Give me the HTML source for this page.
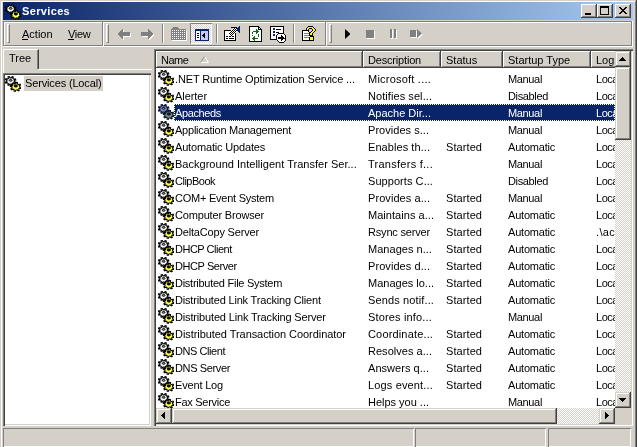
<!DOCTYPE html>
<html><head><meta charset="utf-8">
<style>
*{margin:0;padding:0;box-sizing:border-box}
html,body{width:637px;height:447px;overflow:hidden;background:#d4d0c8;font-family:"Liberation Sans",sans-serif;font-size:11px;color:#000}
.a{position:absolute}
.t{position:absolute;white-space:nowrap;line-height:13px}
.btn{position:absolute;background:#d4d0c8;box-shadow:inset -1px -1px #404040,inset 1px 1px #fff,inset -2px -2px #808080}
.hdr{position:absolute;top:51px;height:17px;background:#d4d0c8;box-shadow:inset -1px -1px #404040,inset 1px 1px #fff,inset -2px -2px #808080}
.hdr span{position:absolute;left:5px;top:3px;line-height:13px;white-space:nowrap}
.grip{position:absolute;top:24px;width:3px;height:19px;border-left:1px solid #fff;border-top:1px solid #fff;border-right:1px solid #808080;border-bottom:1px solid #808080}
.sep{position:absolute;top:24px;width:2px;height:19px;border-left:1px solid #808080;border-right:1px solid #fff}
.row{position:absolute;left:156px;width:459px;height:17px}
.row .t{top:3px}
.dith{background-color:#fff;background-image:linear-gradient(45deg,#d4d0c8 25%,transparent 25%,transparent 75%,#d4d0c8 75%),linear-gradient(45deg,#d4d0c8 25%,transparent 25%,transparent 75%,#d4d0c8 75%);background-size:2px 2px;background-position:0 0,1px 1px}
</style></head>
<body>
<div style="position:absolute;left:0;top:0;width:637px;height:447px;will-change:transform">
<svg width="0" height="0" style="position:absolute">
<defs>
<g id="gear"><path d="M9.32 5.64 L10.77 6.33 L10.26 7.32 L8.68 6.89 L7.70 7.69 L8.15 9.05 L6.96 9.44 L6.21 8.19 L4.85 8.17 L4.03 9.39 L2.87 8.96 L3.38 7.62 L2.43 6.78 L0.84 7.16 L0.38 6.16 L1.85 5.52 L1.88 4.36 L0.43 3.67 L0.94 2.68 L2.52 3.11 L3.50 2.31 L3.05 0.95 L4.24 0.56 L4.99 1.81 L6.35 1.83 L7.17 0.61 L8.33 1.04 L7.82 2.38 L8.77 3.22 L10.36 2.84 L10.82 3.84 L9.35 4.48Z" fill="#fff" stroke="#000" stroke-width="1.15"/><ellipse cx="5.6" cy="4.4" rx="1.4" ry="0.9" fill="#a0a0a0" stroke="#000" stroke-width="1"/><path d="M14.70 10.90 L16.28 11.32 L16.00 12.36 L14.35 12.22 L13.56 13.16 L14.31 14.38 L13.22 14.95 L12.18 13.89 L10.80 14.10 L10.28 15.39 L9.02 15.17 L9.20 13.81 L8.04 13.16 L6.56 13.77 L5.86 12.88 L7.15 12.03 L6.90 10.90 L5.32 10.48 L5.60 9.44 L7.25 9.58 L8.04 8.64 L7.29 7.42 L8.38 6.85 L9.42 7.91 L10.80 7.70 L11.32 6.41 L12.58 6.63 L12.40 7.99 L13.56 8.64 L15.04 8.03 L15.74 8.92 L14.45 9.77Z" fill="#ffff50" stroke="#000" stroke-width="1.05"/><ellipse cx="10.8" cy="10.0" rx="1.7" ry="1.0" fill="#000" stroke="#000" stroke-width="1"/></g>
<g id="gearsel"><path d="M9.32 5.64 L10.77 6.33 L10.26 7.32 L8.68 6.89 L7.70 7.69 L8.15 9.05 L6.96 9.44 L6.21 8.19 L4.85 8.17 L4.03 9.39 L2.87 8.96 L3.38 7.62 L2.43 6.78 L0.84 7.16 L0.38 6.16 L1.85 5.52 L1.88 4.36 L0.43 3.67 L0.94 2.68 L2.52 3.11 L3.50 2.31 L3.05 0.95 L4.24 0.56 L4.99 1.81 L6.35 1.83 L7.17 0.61 L8.33 1.04 L7.82 2.38 L8.77 3.22 L10.36 2.84 L10.82 3.84 L9.35 4.48Z" fill="#8591b4" stroke="#05123a" stroke-width="1.15"/><ellipse cx="5.6" cy="4.4" rx="1.4" ry="0.9" fill="#65739a" stroke="#05123a" stroke-width="1"/><path d="M14.70 10.90 L16.28 11.32 L16.00 12.36 L14.35 12.22 L13.56 13.16 L14.31 14.38 L13.22 14.95 L12.18 13.89 L10.80 14.10 L10.28 15.39 L9.02 15.17 L9.20 13.81 L8.04 13.16 L6.56 13.77 L5.86 12.88 L7.15 12.03 L6.90 10.90 L5.32 10.48 L5.60 9.44 L7.25 9.58 L8.04 8.64 L7.29 7.42 L8.38 6.85 L9.42 7.91 L10.80 7.70 L11.32 6.41 L12.58 6.63 L12.40 7.99 L13.56 8.64 L15.04 8.03 L15.74 8.92 L14.45 9.77Z" fill="#7d8d65" stroke="#05123a" stroke-width="1.05"/><ellipse cx="10.8" cy="10.0" rx="1.7" ry="1.0" fill="#05123a" stroke="#05123a" stroke-width="1"/></g>
</defs>
</svg>

<!-- window frame -->
<div class="a" style="left:0;top:0;width:637px;height:1px;background:#d4d0c8"></div>
<div class="a" style="left:1px;top:1px;width:634px;height:1px;background:#fff"></div>
<div class="a" style="left:1px;top:1px;width:1px;height:446px;background:#fff"></div>
<div class="a" style="left:635px;top:1px;width:1px;height:446px;background:#808080"></div>
<div class="a" style="left:636px;top:0;width:1px;height:447px;background:#404040"></div>

<!-- title bar -->
<div class="a" style="left:3px;top:2px;width:630px;height:18px;background:linear-gradient(to right,#0a246a,#a6caf0)"></div>
<svg class="a" style="left:5px;top:4px" width="16" height="16"><use href="#gear"/></svg>
<div class="t" style="left:22px;top:5px;color:#fff;font-weight:bold;font-size:11px;letter-spacing:0.35px">Services</div>
<div class="btn" style="left:581px;top:4px;width:16px;height:14px"><div class="a" style="left:4px;top:9px;width:6px;height:2px;background:#000"></div></div>
<div class="btn" style="left:597px;top:4px;width:16px;height:14px"><div class="a" style="left:3px;top:2px;width:9px;height:9px;border:1px solid #000;border-top-width:2px"></div></div>
<div class="btn" style="left:615px;top:4px;width:16px;height:14px">
<svg class="a" style="left:4px;top:3px" width="8" height="7"><path d="M0 0h2v1h1v1h2v-1h1v-1h2v1h-1v1h-1v1h-1v1h1v1h1v1h1v1h-2v-1h-1v-1h-2v1h-1v1h-2v-1h1v-1h1v-1h1v-1h-1v-1h-1v-1h-1z" fill="#000"/></svg>
</div>

<!-- toolbar etched box -->
<div class="a" style="left:3px;top:21px;width:629px;height:1px;background:#808080"></div>
<div class="a" style="left:3px;top:21px;width:1px;height:25px;background:#808080"></div>
<div class="a" style="left:4px;top:22px;width:627px;height:1px;background:#fff"></div>
<div class="a" style="left:4px;top:22px;width:1px;height:23px;background:#fff"></div>
<div class="a" style="left:3px;top:45px;width:629px;height:1px;background:#808080"></div>
<div class="a" style="left:631px;top:21px;width:1px;height:25px;background:#808080"></div>
<div class="a" style="left:3px;top:46px;width:630px;height:1px;background:#fff"></div>
<div class="a" style="left:632px;top:21px;width:1px;height:26px;background:#fff"></div>

<!-- band 1 menu -->
<div class="grip" style="left:7px"></div>
<div class="t" style="left:22px;top:28px">Action</div>
<div class="a" style="left:22px;top:39px;width:6px;height:1px;background:#000"></div>
<div class="t" style="left:68px;top:28px;letter-spacing:-0.3px">View</div>
<div class="a" style="left:68px;top:39px;width:6px;height:1px;background:#000"></div>
<div class="a" style="left:102px;top:22px;width:1px;height:24px;background:#808080"></div>
<div class="a" style="left:103px;top:22px;width:1px;height:24px;background:#fff"></div>

<!-- band 2 -->
<div class="grip" style="left:106px"></div>
<!-- back arrow disabled -->
<svg class="a" style="left:116px;top:28px" width="16" height="13">
<path d="M6 1h1v3h7v4h-7v3h-1v-1h-1v-1h-1v-1h-1v-1h-1v-2h1v-1h1v-1h1v-1h1z" fill="#fff" transform="translate(1,1)"/>
<path d="M6 1h1v3h7v4h-7v3h-1v-1h-1v-1h-1v-1h-1v-1h-1v-2h1v-1h1v-1h1v-1h1z" fill="#808080"/>
</svg>
<svg class="a" style="left:140px;top:28px" width="15" height="13">
<path d="M1 4h7v-3h1v1h1v1h1v1h1v1h1v2h-1v1h-1v1h-1v1h-1v1h-1v-3h-7z" fill="#fff" transform="translate(1,1)"/>
<path d="M1 4h7v-3h1v1h1v1h1v1h1v1h1v2h-1v1h-1v1h-1v1h-1v1h-1v-3h-7z" fill="#808080"/>
</svg>
<div class="sep" style="left:162px"></div>
<!-- folder disabled -->
<svg class="a" style="left:170px;top:26px" width="18" height="16">
<defs><pattern id="dp" width="2" height="2" patternUnits="userSpaceOnUse" x="0" y="0"><rect width="2" height="2" fill="#808080"/><rect width="1" height="1" fill="#fff"/></pattern></defs>
<path d="M16 4h1v11h-15v-1h14z" fill="#fff"/>
<path d="M3 1h5v1h1v1h7v11h-15v-11h1v-1h1z" fill="#808080"/><path d="M2 4h13v9h-13z" fill="url(#dp)"/>
</svg>
<!-- show/hide pressed -->
<div class="a dith" style="left:190px;top:23px;width:22px;height:21px;box-shadow:inset 1px 1px #808080,inset -1px -1px #fff"></div>
<svg class="a" style="left:195px;top:29px" width="14" height="12"><path d="M0 0h14v1h-14zM0 1h14v1h-14zM0 2h1v1h-1zM5 2h1v1h-1zM13 2h1v1h-1zM0 3h1v1h-1zM5 3h1v1h-1zM13 3h1v1h-1zM0 4h1v1h-1zM5 4h1v1h-1zM13 4h1v1h-1zM0 5h1v1h-1zM5 5h1v1h-1zM13 5h1v1h-1zM0 6h1v1h-1zM5 6h1v1h-1zM13 6h1v1h-1zM0 7h1v1h-1zM5 7h1v1h-1zM13 7h1v1h-1zM0 8h1v1h-1zM5 8h1v1h-1zM13 8h1v1h-1zM0 9h1v1h-1zM5 9h1v1h-1zM13 9h1v1h-1zM0 10h1v1h-1zM5 10h1v1h-1zM13 10h1v1h-1zM0 11h14v1h-14z" fill="#0a246a"/><path d="M1 2h4v1h-4zM1 3h4v1h-4zM1 4h1v1h-1zM4 4h1v1h-1zM1 5h4v1h-4zM1 6h1v1h-1zM4 6h1v1h-1zM1 7h4v1h-4zM1 8h1v1h-1zM4 8h1v1h-1zM1 9h4v1h-4zM1 10h4v1h-4z" fill="#fff"/><path d="M6 2h7v1h-7zM6 3h7v1h-7zM6 4h3v1h-3zM10 4h3v1h-3zM6 5h2v1h-2zM10 5h3v1h-3zM6 6h1v1h-1zM10 6h3v1h-3zM6 7h2v1h-2zM10 7h3v1h-3zM6 8h3v1h-3zM10 8h3v1h-3zM6 9h7v1h-7zM6 10h7v1h-7z" fill="#c8c8f8"/><path d="M2 4h2v1h-2zM9 4h1v1h-1zM8 5h2v1h-2zM2 6h2v1h-2zM7 6h3v1h-3zM8 7h2v1h-2zM2 8h2v1h-2zM9 8h1v1h-1z" fill="#000"/></svg>
<div class="sep" style="left:216px"></div>
<!-- properties -->
<svg class="a" style="left:224px;top:26px" width="17" height="15">
<defs><pattern id="dk" width="2" height="2" patternUnits="userSpaceOnUse"><rect width="2" height="2" fill="#fff"/><rect width="1" height="1" fill="#000"/><rect x="1" y="1" width="1" height="1" fill="#000"/></pattern></defs>
<rect x="0" y="4" width="12" height="11" fill="#000"/>
<rect x="1" y="5" width="10" height="9" fill="#fff"/>
<rect x="2" y="10" width="2" height="1" fill="#000"/><rect x="5" y="10" width="5" height="1" fill="#000"/>
<rect x="2" y="12" width="2" height="1" fill="#000"/><rect x="5" y="12" width="5" height="1" fill="#000"/>
<path d="M3 8h1v-1h1v-1h1v-1h1v-1h1v-1h1v-1h4v4h-1v1h-1v1h-1v1h-1v1h-1v1h-1v-1h-1v-1h-1v-1h-1z" fill="url(#dk)"/>
<rect x="7" y="1" width="6" height="1" fill="#000"/>
<path d="M13 2h1v-1h1v-1h1v7h-1v-1h-1v-1h-1z" fill="#0a246a"/>
</svg>
<!-- refresh -->
<svg class="a" style="left:249px;top:26px" width="14" height="16"><path d="M0 0h10v1h-10zM0 1h1v1h-1zM9 1h2v1h-2zM0 2h1v1h-1zM9 2h1v1h-1zM11 2h1v1h-1zM0 3h1v1h-1zM9 3h4v1h-4zM0 4h1v1h-1zM12 4h1v1h-1zM0 5h1v1h-1zM12 5h1v1h-1zM0 6h1v1h-1zM12 6h1v1h-1zM0 7h1v1h-1zM12 7h1v1h-1zM0 8h1v1h-1zM12 8h1v1h-1zM0 9h1v1h-1zM12 9h1v1h-1zM0 10h1v1h-1zM12 10h1v1h-1zM0 11h1v1h-1zM12 11h1v1h-1zM0 12h1v1h-1zM12 12h1v1h-1zM0 13h1v1h-1zM12 13h1v1h-1zM0 14h1v1h-1zM12 14h1v1h-1zM0 15h13v1h-13z" fill="#000"/><path d="M1 1h8v1h-8zM1 2h8v1h-8zM10 2h1v1h-1zM1 3h6v1h-6zM8 3h1v1h-1zM1 4h6v1h-6zM9 4h3v1h-3zM1 5h3v1h-3zM10 5h2v1h-2zM1 6h2v1h-2zM4 6h3v1h-3zM9 6h3v1h-3zM1 7h2v1h-2zM4 7h3v1h-3zM8 7h4v1h-4zM1 8h8v1h-8zM10 8h2v1h-2zM1 9h2v1h-2zM4 9h5v1h-5zM10 9h2v1h-2zM1 10h4v1h-4zM6 10h3v1h-3zM10 10h2v1h-2zM1 11h3v1h-3zM6 11h6v1h-6zM1 12h2v1h-2zM9 12h3v1h-3zM1 13h3v1h-3zM6 13h6v1h-6zM1 14h4v1h-4zM6 14h6v1h-6z" fill="#fff"/><path d="M7 3h1v1h-1zM7 4h2v1h-2zM4 5h6v1h-6zM3 6h1v1h-1zM7 6h2v1h-2zM3 7h1v1h-1zM7 7h1v1h-1zM9 8h1v1h-1zM3 9h1v1h-1zM9 9h1v1h-1zM5 10h1v1h-1zM9 10h1v1h-1zM4 11h2v1h-2zM3 12h6v1h-6zM4 13h2v1h-2zM5 14h1v1h-1z" fill="#107010"/></svg>
<!-- export list -->
<svg class="a" style="left:270px;top:26px" width="17" height="17"><path d="M0 0h14v1h-14zM0 1h1v1h-1zM13 1h1v1h-1zM0 2h1v1h-1zM13 2h1v1h-1zM0 3h1v1h-1zM6 3h5v1h-5zM13 3h1v1h-1zM0 4h1v1h-1zM13 4h1v1h-1zM0 5h1v1h-1zM13 5h1v1h-1zM0 6h1v1h-1zM6 6h3v1h-3zM13 6h1v1h-1zM0 7h1v1h-1zM8 7h6v1h-6zM0 8h1v1h-1zM7 8h1v1h-1zM14 8h1v1h-1zM0 9h1v1h-1zM6 9h1v1h-1zM11 9h1v1h-1zM15 9h1v1h-1zM0 10h1v1h-1zM6 10h1v1h-1zM11 10h2v1h-2zM15 10h1v1h-1zM0 11h1v1h-1zM6 11h1v1h-1zM8 11h6v1h-6zM15 11h1v1h-1zM0 12h1v1h-1zM6 12h1v1h-1zM8 12h8v1h-8zM0 13h7v1h-7zM11 13h2v1h-2zM15 13h1v1h-1zM7 14h1v1h-1zM11 14h1v1h-1zM15 14h1v1h-1zM8 15h1v1h-1zM14 15h1v1h-1zM9 16h5v1h-5z" fill="#000"/><path d="M1 1h12v1h-12zM1 2h2v1h-2zM5 2h8v1h-8zM1 3h2v1h-2zM5 3h1v1h-1zM11 3h2v1h-2zM1 4h12v1h-12zM1 5h2v1h-2zM5 5h8v1h-8zM1 6h2v1h-2zM5 6h1v1h-1zM9 6h4v1h-4zM1 7h7v1h-7zM1 8h2v1h-2zM5 8h2v1h-2zM8 8h6v1h-6zM1 9h2v1h-2zM5 9h1v1h-1zM7 9h4v1h-4zM12 9h3v1h-3zM1 10h5v1h-5zM7 10h4v1h-4zM13 10h2v1h-2zM1 11h5v1h-5zM7 11h1v1h-1zM14 11h1v1h-1zM1 12h5v1h-5zM7 12h1v1h-1zM7 13h4v1h-4zM13 13h2v1h-2zM8 14h3v1h-3zM12 14h3v1h-3zM9 15h5v1h-5z" fill="#fff"/><path d="M3 2h2v1h-2zM3 3h2v1h-2zM3 5h2v1h-2zM3 6h2v1h-2zM3 8h2v1h-2zM3 9h2v1h-2z" fill="#0a246a"/></svg>
<div class="sep" style="left:293px"></div>
<!-- help -->
<svg class="a" style="left:302px;top:26px" width="15" height="15"><path d="M6 0h5v1h-5zM5 1h1v1h-1zM11 1h1v1h-1zM4 2h1v1h-1zM7 2h3v1h-3zM12 2h1v1h-1zM4 3h1v1h-1zM6 3h1v1h-1zM10 3h1v1h-1zM13 3h1v1h-1zM0 4h7v1h-7zM10 4h1v1h-1zM13 4h1v1h-1zM0 5h1v1h-1zM6 5h1v1h-1zM9 5h1v1h-1zM12 5h1v1h-1zM0 6h1v1h-1zM7 6h2v1h-2zM11 6h1v1h-1zM0 7h1v1h-1zM7 7h1v1h-1zM10 7h1v1h-1zM0 8h1v1h-1zM7 8h1v1h-1zM10 8h1v1h-1zM0 9h1v1h-1zM7 9h4v1h-4zM0 10h1v1h-1zM8 10h4v1h-4zM0 11h1v1h-1zM7 11h1v1h-1zM11 11h1v1h-1zM0 12h1v1h-1zM7 12h1v1h-1zM11 12h1v1h-1zM0 13h1v1h-1zM7 13h1v1h-1zM11 13h1v1h-1zM0 14h12v1h-12z" fill="#000"/><path d="M6 1h5v1h-5zM5 2h2v1h-2zM10 2h2v1h-2zM5 3h1v1h-1zM11 3h2v1h-2zM11 4h2v1h-2zM10 5h2v1h-2zM9 6h2v1h-2zM8 7h2v1h-2zM8 8h2v1h-2zM8 11h3v1h-3zM8 12h3v1h-3zM8 13h3v1h-3z" fill="#ffff00"/><path d="M1 5h5v1h-5zM1 6h6v1h-6zM1 7h1v1h-1zM1 8h6v1h-6zM1 9h1v1h-1zM1 10h7v1h-7zM1 11h1v1h-1zM1 12h6v1h-6zM1 13h6v1h-6z" fill="#fff"/><path d="M2 7h5v1h-5zM2 9h5v1h-5zM2 11h5v1h-5z" fill="#808080"/></svg>
<div class="a" style="left:325px;top:22px;width:1px;height:24px;background:#808080"></div>
<div class="a" style="left:326px;top:22px;width:1px;height:24px;background:#fff"></div>

<!-- band 3 -->
<div class="grip" style="left:329px"></div>
<svg class="a" style="left:345px;top:29px" width="6" height="10"><path d="M0 0l5 4.5v1l-5 4.5z" fill="#000"/></svg>
<div class="a" style="left:367px;top:31px;width:8px;height:8px;background:#fff"></div>
<div class="a" style="left:366px;top:30px;width:8px;height:8px;background:#808080"></div>
<div class="a" style="left:391px;top:30px;width:2px;height:9px;background:#fff"></div>
<div class="a" style="left:395px;top:30px;width:2px;height:9px;background:#fff"></div>
<div class="a" style="left:390px;top:29px;width:2px;height:9px;background:#808080"></div>
<div class="a" style="left:394px;top:29px;width:2px;height:9px;background:#808080"></div>
<svg class="a" style="left:410px;top:29px" width="15" height="11">
<path d="M1 2h6v7h-6zM8 1l5 4.5-5 4.5z" fill="#fff"/>
<path d="M0 1h6v7h-6zM7 0l5 4.5-5 4.5z" fill="#808080"/>
</svg>

<!-- tree tab -->
<div class="a" style="left:3px;top:49px;width:36px;height:20px;background:#d4d0c8;border-left:1px solid #fff;border-top:1px solid #fff;border-right:1px solid #404040"></div>
<div class="a" style="left:3px;top:69px;width:1px;height:4px;background:#fff"></div>
<div class="a" style="left:37px;top:50px;width:1px;height:19px;background:#808080"></div>
<div class="t" style="left:9px;top:52px">Tree</div>
<div class="a" style="left:38px;top:69px;width:114px;height:1px;background:#fff"></div>

<!-- tree view -->
<div class="a" style="left:3px;top:73px;width:148px;height:353px;background:#fff;box-shadow:inset 1px 1px #808080,inset 2px 2px #404040,inset -1px -1px #fff,inset -2px -2px #d4d0c8"></div>
<svg class="a" style="left:5px;top:76px" width="16" height="16"><use href="#gear"/></svg>
<div class="a" style="left:24px;top:76px;width:79px;height:15px;background:#d4d0c8"></div>
<div class="t" style="left:25px;top:77px;letter-spacing:-0.15px">Services (Local)</div>

<!-- list view frame -->
<div class="a" style="left:154px;top:49px;width:479px;height:377px;background:#fff;box-shadow:inset 1px 1px #808080,inset 2px 2px #404040,inset -1px -1px #fff,inset -2px -2px #d4d0c8"></div>

<!-- header -->
<div class="hdr" style="left:156px;width:207px"><span style="letter-spacing:-0.5px">Name</span>
<svg class="a" style="left:44px;top:5px" width="10" height="8"><path d="M4.5 0.5l4 6h-8z" fill="none" stroke="#fff"/><path d="M4.5 0.5l-4 6" fill="none" stroke="#808080"/></svg>
</div>
<div class="hdr" style="left:363px;width:78px"><span style="letter-spacing:-0.18px">Description</span></div>
<div class="hdr" style="left:441px;width:62px"><span>Status</span></div>
<div class="hdr" style="left:503px;width:88px"><span>Startup Type</span></div>
<div class="hdr" style="left:591px;width:100px;clip-path:inset(0 76px 0 0)"><span>Log</span></div>

<div id="rows"></div>
<!-- ROWS -->
<div class="row" style="top:70px"><svg class="a" style="left:2px;top:0" width="16" height="16"><use href="#gear"/></svg><div class="t" style="left:19px;color:#000;letter-spacing:-0.14px">.NET Runtime Optimization Service ...</div><div class="t" style="left:212px;color:#000;letter-spacing:0.22px">Microsoft ....</div><div class="t" style="left:352px;color:#000;letter-spacing:-0.35px">Manual</div><div class="t" style="left:440px;color:#000;letter-spacing:-0.46px">Local</div></div>
<div class="row" style="top:87px"><svg class="a" style="left:2px;top:0" width="16" height="16"><use href="#gear"/></svg><div class="t" style="left:19px;color:#000;letter-spacing:-0.06px">Alerter</div><div class="t" style="left:212px;color:#000;letter-spacing:0.07px">Notifies sel...</div><div class="t" style="left:352px;color:#000;letter-spacing:-0.35px">Disabled</div><div class="t" style="left:440px;color:#000;letter-spacing:-0.46px">Local</div></div>
<div class="row" style="top:104px"><div class="a" style="left:18px;top:0;width:441px;height:17px;background:#0a246a;outline:1px dotted #fff;outline-offset:-1px"></div><svg class="a" style="left:2px;top:0" width="16" height="16"><use href="#gearsel"/></svg><div class="t" style="left:19px;color:#fff;letter-spacing:-0.37px">Apacheds</div><div class="t" style="left:212px;color:#fff;letter-spacing:0.00px">Apache Dir...</div><div class="t" style="left:352px;color:#fff;letter-spacing:-0.35px">Manual</div><div class="t" style="left:440px;color:#fff;letter-spacing:-0.46px">Local</div></div>
<div class="row" style="top:121px"><svg class="a" style="left:2px;top:0" width="16" height="16"><use href="#gear"/></svg><div class="t" style="left:19px;color:#000;letter-spacing:-0.23px">Application Management</div><div class="t" style="left:212px;color:#000;letter-spacing:0.04px">Provides s...</div><div class="t" style="left:352px;color:#000;letter-spacing:-0.35px">Manual</div><div class="t" style="left:440px;color:#000;letter-spacing:-0.46px">Local</div></div>
<div class="row" style="top:138px"><svg class="a" style="left:2px;top:0" width="16" height="16"><use href="#gear"/></svg><div class="t" style="left:19px;color:#000;letter-spacing:-0.17px">Automatic Updates</div><div class="t" style="left:212px;color:#000;letter-spacing:0.07px">Enables th...</div><div class="t" style="left:290px;color:#000;letter-spacing:0.08px">Started</div><div class="t" style="left:352px;color:#000;letter-spacing:-0.21px">Automatic</div><div class="t" style="left:440px;color:#000;letter-spacing:-0.46px">Local</div></div>
<div class="row" style="top:155px"><svg class="a" style="left:2px;top:0" width="16" height="16"><use href="#gear"/></svg><div class="t" style="left:19px;color:#000;letter-spacing:0.02px">Background Intelligent Transfer Ser...</div><div class="t" style="left:212px;color:#000;letter-spacing:0.26px">Transfers f...</div><div class="t" style="left:352px;color:#000;letter-spacing:-0.35px">Manual</div><div class="t" style="left:440px;color:#000;letter-spacing:-0.46px">Local</div></div>
<div class="row" style="top:172px"><svg class="a" style="left:2px;top:0" width="16" height="16"><use href="#gear"/></svg><div class="t" style="left:19px;color:#000;letter-spacing:-0.50px">ClipBook</div><div class="t" style="left:212px;color:#000;letter-spacing:0.06px">Supports C...</div><div class="t" style="left:352px;color:#000;letter-spacing:-0.35px">Disabled</div><div class="t" style="left:440px;color:#000;letter-spacing:-0.46px">Local</div></div>
<div class="row" style="top:189px"><svg class="a" style="left:2px;top:0" width="16" height="16"><use href="#gear"/></svg><div class="t" style="left:19px;color:#000;letter-spacing:-0.24px">COM+ Event System</div><div class="t" style="left:212px;color:#000;letter-spacing:0.07px">Provides a...</div><div class="t" style="left:290px;color:#000;letter-spacing:0.08px">Started</div><div class="t" style="left:352px;color:#000;letter-spacing:-0.35px">Manual</div><div class="t" style="left:440px;color:#000;letter-spacing:-0.46px">Local</div></div>
<div class="row" style="top:206px"><svg class="a" style="left:2px;top:0" width="16" height="16"><use href="#gear"/></svg><div class="t" style="left:19px;color:#000;letter-spacing:-0.17px">Computer Browser</div><div class="t" style="left:212px;color:#000;letter-spacing:0.04px">Maintains a...</div><div class="t" style="left:290px;color:#000;letter-spacing:0.08px">Started</div><div class="t" style="left:352px;color:#000;letter-spacing:-0.21px">Automatic</div><div class="t" style="left:440px;color:#000;letter-spacing:-0.46px">Local</div></div>
<div class="row" style="top:223px"><svg class="a" style="left:2px;top:0" width="16" height="16"><use href="#gear"/></svg><div class="t" style="left:19px;color:#000;letter-spacing:-0.18px">DeltaCopy Server</div><div class="t" style="left:212px;color:#000;letter-spacing:-0.18px">Rsync server</div><div class="t" style="left:290px;color:#000;letter-spacing:0.08px">Started</div><div class="t" style="left:352px;color:#000;letter-spacing:-0.21px">Automatic</div><div class="t" style="left:440px;color:#000;letter-spacing:0.32px">.\ac</div></div>
<div class="row" style="top:240px"><svg class="a" style="left:2px;top:0" width="16" height="16"><use href="#gear"/></svg><div class="t" style="left:19px;color:#000;letter-spacing:-0.49px">DHCP Client</div><div class="t" style="left:212px;color:#000;letter-spacing:0.03px">Manages n...</div><div class="t" style="left:290px;color:#000;letter-spacing:0.08px">Started</div><div class="t" style="left:352px;color:#000;letter-spacing:-0.21px">Automatic</div><div class="t" style="left:440px;color:#000;letter-spacing:-0.46px">Local</div></div>
<div class="row" style="top:257px"><svg class="a" style="left:2px;top:0" width="16" height="16"><use href="#gear"/></svg><div class="t" style="left:19px;color:#000;letter-spacing:-0.42px">DHCP Server</div><div class="t" style="left:212px;color:#000;letter-spacing:0.07px">Provides d...</div><div class="t" style="left:290px;color:#000;letter-spacing:0.08px">Started</div><div class="t" style="left:352px;color:#000;letter-spacing:-0.21px">Automatic</div><div class="t" style="left:440px;color:#000;letter-spacing:-0.46px">Local</div></div>
<div class="row" style="top:274px"><svg class="a" style="left:2px;top:0" width="16" height="16"><use href="#gear"/></svg><div class="t" style="left:19px;color:#000;letter-spacing:-0.26px">Distributed File System</div><div class="t" style="left:212px;color:#000;letter-spacing:-0.00px">Manages lo...</div><div class="t" style="left:290px;color:#000;letter-spacing:0.08px">Started</div><div class="t" style="left:352px;color:#000;letter-spacing:-0.21px">Automatic</div><div class="t" style="left:440px;color:#000;letter-spacing:-0.46px">Local</div></div>
<div class="row" style="top:291px"><svg class="a" style="left:2px;top:0" width="16" height="16"><use href="#gear"/></svg><div class="t" style="left:19px;color:#000;letter-spacing:-0.18px">Distributed Link Tracking Client</div><div class="t" style="left:212px;color:#000;letter-spacing:0.13px">Sends notif...</div><div class="t" style="left:290px;color:#000;letter-spacing:0.08px">Started</div><div class="t" style="left:352px;color:#000;letter-spacing:-0.21px">Automatic</div><div class="t" style="left:440px;color:#000;letter-spacing:-0.46px">Local</div></div>
<div class="row" style="top:308px"><svg class="a" style="left:2px;top:0" width="16" height="16"><use href="#gear"/></svg><div class="t" style="left:19px;color:#000;letter-spacing:-0.16px">Distributed Link Tracking Server</div><div class="t" style="left:212px;color:#000;letter-spacing:0.16px">Stores info...</div><div class="t" style="left:352px;color:#000;letter-spacing:-0.35px">Manual</div><div class="t" style="left:440px;color:#000;letter-spacing:-0.46px">Local</div></div>
<div class="row" style="top:325px"><svg class="a" style="left:2px;top:0" width="16" height="16"><use href="#gear"/></svg><div class="t" style="left:19px;color:#000;letter-spacing:-0.06px">Distributed Transaction Coordinator</div><div class="t" style="left:212px;color:#000;letter-spacing:0.16px">Coordinate...</div><div class="t" style="left:290px;color:#000;letter-spacing:0.08px">Started</div><div class="t" style="left:352px;color:#000;letter-spacing:-0.21px">Automatic</div><div class="t" style="left:440px;color:#000;letter-spacing:-0.46px">Local</div></div>
<div class="row" style="top:342px"><svg class="a" style="left:2px;top:0" width="16" height="16"><use href="#gear"/></svg><div class="t" style="left:19px;color:#000;letter-spacing:-0.44px">DNS Client</div><div class="t" style="left:212px;color:#000;letter-spacing:0.03px">Resolves a...</div><div class="t" style="left:290px;color:#000;letter-spacing:0.08px">Started</div><div class="t" style="left:352px;color:#000;letter-spacing:-0.21px">Automatic</div><div class="t" style="left:440px;color:#000;letter-spacing:-0.46px">Local</div></div>
<div class="row" style="top:359px"><svg class="a" style="left:2px;top:0" width="16" height="16"><use href="#gear"/></svg><div class="t" style="left:19px;color:#000;letter-spacing:-0.37px">DNS Server</div><div class="t" style="left:212px;color:#000;letter-spacing:0.04px">Answers q...</div><div class="t" style="left:290px;color:#000;letter-spacing:0.08px">Started</div><div class="t" style="left:352px;color:#000;letter-spacing:-0.21px">Automatic</div><div class="t" style="left:440px;color:#000;letter-spacing:-0.46px">Local</div></div>
<div class="row" style="top:376px"><svg class="a" style="left:2px;top:0" width="16" height="16"><use href="#gear"/></svg><div class="t" style="left:19px;color:#000;letter-spacing:-0.17px">Event Log</div><div class="t" style="left:212px;color:#000;letter-spacing:0.15px">Logs event...</div><div class="t" style="left:290px;color:#000;letter-spacing:0.08px">Started</div><div class="t" style="left:352px;color:#000;letter-spacing:-0.21px">Automatic</div><div class="t" style="left:440px;color:#000;letter-spacing:-0.46px">Local</div></div>
<div class="row" style="top:393px"><svg class="a" style="left:2px;top:0" width="16" height="16"><use href="#gear"/></svg><div class="t" style="left:19px;color:#000;letter-spacing:-0.28px">Fax Service</div><div class="t" style="left:212px;color:#000;letter-spacing:-0.01px">Helps you ...</div><div class="t" style="left:352px;color:#000;letter-spacing:-0.35px">Manual</div><div class="t" style="left:440px;color:#000;letter-spacing:-0.46px">Local</div></div>

<!-- vertical scrollbar -->
<div class="a dith" style="left:615px;top:51px;width:16px;height:357px"></div>
<div class="btn" style="left:615px;top:51px;width:16px;height:16px;box-shadow:inset -1px -1px #404040,inset 1px 1px #d4d0c8,inset -2px -2px #808080,inset 2px 2px #fff">
<svg class="a" style="left:4px;top:6px" width="7" height="4"><path d="M3 0h1v1h1v1h1v1h1v1h-7v-1h1v-1h1v-1h1z" fill="#000"/></svg></div>
<div class="btn" style="left:615px;top:67px;width:16px;height:73px;box-shadow:inset -1px -1px #404040,inset 1px 1px #d4d0c8,inset -2px -2px #808080,inset 2px 2px #fff"></div>
<div class="btn" style="left:615px;top:392px;width:16px;height:16px;box-shadow:inset -1px -1px #404040,inset 1px 1px #d4d0c8,inset -2px -2px #808080,inset 2px 2px #fff">
<svg class="a" style="left:4px;top:6px" width="7" height="4"><path d="M0 0h7v1h-1v1h-1v1h-1v1h-1v-1h-1v-1h-1v-1h-1z" fill="#000"/></svg></div>

<!-- horizontal scrollbar -->
<div class="a dith" style="left:156px;top:408px;width:459px;height:16px"></div>
<div class="btn" style="left:156px;top:408px;width:16px;height:16px;box-shadow:inset -1px -1px #404040,inset 1px 1px #d4d0c8,inset -2px -2px #808080,inset 2px 2px #fff">
<svg class="a" style="left:5px;top:4px" width="4" height="7"><path d="M3 0h1v7h-1v-1h-1v-1h-1v-1h-1v-1h1v-1h1v-1h1z" fill="#000"/></svg></div>
<div class="btn" style="left:172px;top:408px;width:385px;height:16px;box-shadow:inset -1px -1px #404040,inset 1px 1px #d4d0c8,inset -2px -2px #808080,inset 2px 2px #fff"></div>
<div class="btn" style="left:599px;top:408px;width:16px;height:16px;box-shadow:inset -1px -1px #404040,inset 1px 1px #d4d0c8,inset -2px -2px #808080,inset 2px 2px #fff">
<svg class="a" style="left:6px;top:4px" width="4" height="7"><path d="M0 0h1v1h1v1h1v1h1v1h-1v1h-1v1h-1v1h-1z" fill="#000"/></svg></div>
<div class="a" style="left:615px;top:408px;width:16px;height:16px;background:#d4d0c8"></div>

<!-- status bar -->
<div class="a" style="left:3px;top:428px;width:411px;height:19px;box-shadow:inset 1px 1px #808080,inset -1px -1px #fff"></div>
<div class="a" style="left:415px;top:428px;width:131px;height:19px;box-shadow:inset 1px 1px #808080,inset -1px -1px #fff"></div>
<div class="a" style="left:548px;top:428px;width:83px;height:19px;box-shadow:inset 1px 1px #808080,inset -1px -1px #fff"></div>
</div>
</body></html>
